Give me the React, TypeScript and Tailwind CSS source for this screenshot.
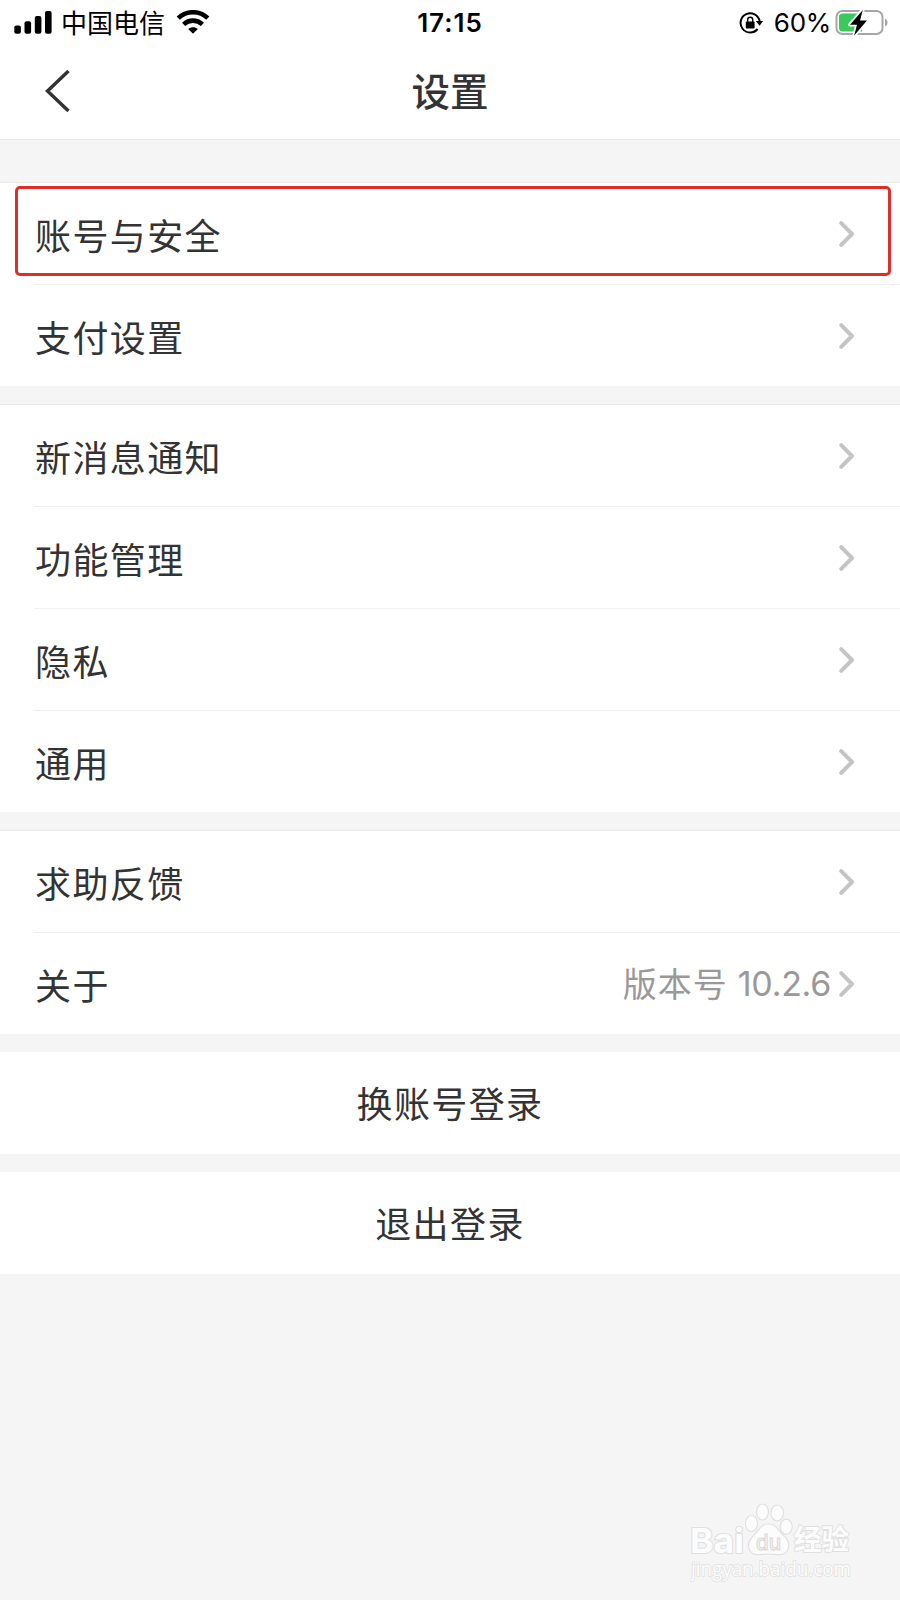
import { Fragment } from "react";

type Item = { label: string; value?: string; version?: string; highlighted?: boolean };

const groups: Item[][] = [
  [{ label: "账号与安全", highlighted: true }, { label: "支付设置" }],
  [{ label: "新消息通知" }, { label: "功能管理" }, { label: "隐私" }, { label: "通用" }],
  [{ label: "求助反馈" }, { label: "关于", value: "版本号", version: "10.2.6" }],
];

function StatusBar() {
  return (
    <div className="grid h-[46px] grid-cols-3 items-center text-black">
      <div className="flex items-center pl-[14px]">
        <svg width="38" height="24" viewBox="0 0 38 24" fill="currentColor">
          <rect x="0.3" y="14.5" width="6.6" height="8.3" rx="2" />
          <rect x="10.5" y="10.2" width="6.6" height="12.6" rx="2" />
          <rect x="20.8" y="5" width="6.6" height="17.8" rx="2" />
          <rect x="31" y="0" width="6.6" height="22.8" rx="2" />
        </svg>
        <span className="mb-[2px] ml-[9px] text-[26px] leading-[44px]">中国电信</span>
        <svg className="ml-[11px]" width="34" height="26" viewBox="0 0 34 26" fill="none" stroke="currentColor">
          <path d="M2.2 8.2 C10.5 0.2 23.5 0.2 31.8 8.2" strokeWidth="4.6" />
          <path d="M7.6 14.4 C13 9.4 21 9.4 26.4 14.4" strokeWidth="4.6" />
          <path d="M12.2 19 C15.2 16.6 18.8 16.6 21.8 19 L17 23.8 Z" fill="currentColor" stroke="none" />
        </svg>
      </div>
      <div className="text-center font-['Inter',sans-serif] text-[26px] leading-[46px] font-semibold tracking-[1px]">
        17:15
      </div>
      <div className="flex items-center justify-end pr-[11px]">
        <svg width="24" height="24" viewBox="0 0 24 24" fill="none" stroke="currentColor">
          <path d="M18.6 18 A9.6 9.6 0 1 1 20.6 10" strokeWidth="2" />
          <path d="M16.8 10 H24 L20.6 14.8 Z" fill="currentColor" stroke="none" />
          <rect x="6.8" y="10.6" width="8.8" height="6.8" rx="1" fill="currentColor" stroke="none" />
          <path d="M8.7 11 V8.8 A2.5 2.5 0 0 1 13.7 8.8 V11" strokeWidth="1.4" />
        </svg>
        <span className="ml-[11px] font-['Inter',sans-serif] text-[26px] leading-[46px] tracking-[-0.3px]">60%</span>
        <svg className="ml-[4px]" width="54" height="30" viewBox="0 0 54 30">
          <rect x="1.5" y="3" width="46" height="23" rx="6" fill="#fff" stroke="#a6a6a6" strokeWidth="2" />
          <path d="M7.5 5.5 H27 V23.5 H7.5 Q4 23.5 4 20 V9 Q4 5.5 7.5 5.5 Z" fill="#3cc95b" />
          <path d="M50 10.5 Q52.6 11.5 52.6 14.5 Q52.6 17.5 50 18.5 Z" fill="#a6a6a6" />
          <path
            d="M27.8 2 L15 16.8 H22 L19.2 27.6 L32 12.6 H25 Z"
            fill="#000"
            stroke="#fff"
            strokeWidth="3.6"
            paintOrder="stroke"
            strokeLinejoin="round"
          />
        </svg>
      </div>
    </div>
  );
}

function Chevron() {
  return (
    <svg className="shrink-0" width="18" height="28" viewBox="0 0 18 28" fill="none">
      <path d="M3.2 3.2 L14 14 L3.2 24.8" stroke="#c4c4c4" strokeWidth="4" strokeLinecap="round" strokeLinejoin="round" />
    </svg>
  );
}

function Row({ label, value, version, highlighted }: Item) {
  return (
    <div className="relative flex h-[101px] items-center pr-[44px] pl-[35px]">
      <span className="text-[36px] leading-[50px] tracking-[1.4px]">{label}</span>
      <div className="ml-auto flex items-center text-[34px] leading-[50px] text-[#999]">
        {value && <span className="mb-[1px] tracking-[1px]">{value}</span>}
        {version && <span className="ml-[10px] font-['Inter',sans-serif] tracking-[-0.3px]">{version}</span>}
      </div>
      <span className="ml-[7px]">
        <Chevron />
      </span>
      {highlighted && (
        <div className="absolute top-[3px] left-[15px] h-[90px] w-[876px] rounded-[5px] border-3 border-[#e02d25]" />
      )}
    </div>
  );
}

function Watermark() {
  return (
    <div className="absolute right-[46px] bottom-[11px] w-[164px]">
      <svg width="164" height="86" viewBox="0 0 164 86" fill="#fcfcfc" stroke="#e0e0e0" strokeWidth="1.2">
        <text x="0" y="50" fontFamily="Inter, sans-serif" fontSize="34" fontWeight="700" textLength="54" lengthAdjust="spacingAndGlyphs" strokeWidth="2" paintOrder="stroke">
          Bai
        </text>
        <ellipse cx="61.5" cy="20.5" rx="6" ry="8" />
        <ellipse cx="72.5" cy="9" rx="6" ry="8" />
        <ellipse cx="87.2" cy="10" rx="6.3" ry="8" />
        <ellipse cx="96.2" cy="23.7" rx="6" ry="7.6" />
        <path d="M78.5 21 C86 21 88 27 93 32 C99 37 100 43 97 48 C93 54 86 51 78.5 51 C71 51 64 54 60 48 C57 43 59 37 64 32 C69 27 71 21 78.5 21 Z" />
        <text x="66" y="47" fontFamily="Inter, sans-serif" fontSize="22" fontWeight="500" textLength="25" lengthAdjust="spacingAndGlyphs" fill="#f5f5f5" stroke="#d8d8d8" strokeWidth="1">
          du
        </text>
        <text x="104" y="47" fontFamily="Noto Sans CJK SC, sans-serif" fontSize="28" fontWeight="700" textLength="55" lengthAdjust="spacingAndGlyphs" strokeWidth="2" paintOrder="stroke">
          经验
        </text>
        <text x="1" y="72.5" fontFamily="Open Sans, sans-serif" fontSize="20" textLength="160" lengthAdjust="spacingAndGlyphs" strokeWidth="1.6" paintOrder="stroke">
          jingyan.baidu.com
        </text>
      </svg>
    </div>
  );
}

export default function App() {
  return (
    <div className="relative flex h-[1600px] w-[900px] flex-col overflow-hidden bg-[#f5f5f5] font-['Noto_Sans_CJK_SC',sans-serif] text-[#333]">
      <header className="h-[140px] border-b border-[#ebebeb] bg-white">
        <StatusBar />
        <div className="grid h-[90px] grid-cols-3 items-center">
          <svg className="ml-[43px]" width="28" height="44" viewBox="0 0 28 44" fill="none">
            <path d="M25.5 2 L4.5 22 L25.5 42" stroke="#333" strokeWidth="3.4" />
          </svg>
          <h1 className="mb-[5px] text-center text-[38.5px] leading-[50px] font-medium">设置</h1>
        </div>
      </header>

      <main className="mt-[42px] flex flex-col gap-[18px]">
        {groups.map((items, g) => (
          <section key={g} className="border-t border-[#ebebeb] bg-white">
            {items.map((item, i) => (
              <Fragment key={item.label}>
                {i > 0 && <div className="ml-[34px] h-px bg-[#efefef]" />}
                <Row {...item} />
              </Fragment>
            ))}
          </section>
        ))}
        {["换账号登录", "退出登录"].map((label) => (
          <button key={label} className="h-[102px] bg-white pb-[2px] text-[36px] leading-[50px] tracking-[1.4px]">
            {label}
          </button>
        ))}
      </main>

      <Watermark />
    </div>
  );
}
